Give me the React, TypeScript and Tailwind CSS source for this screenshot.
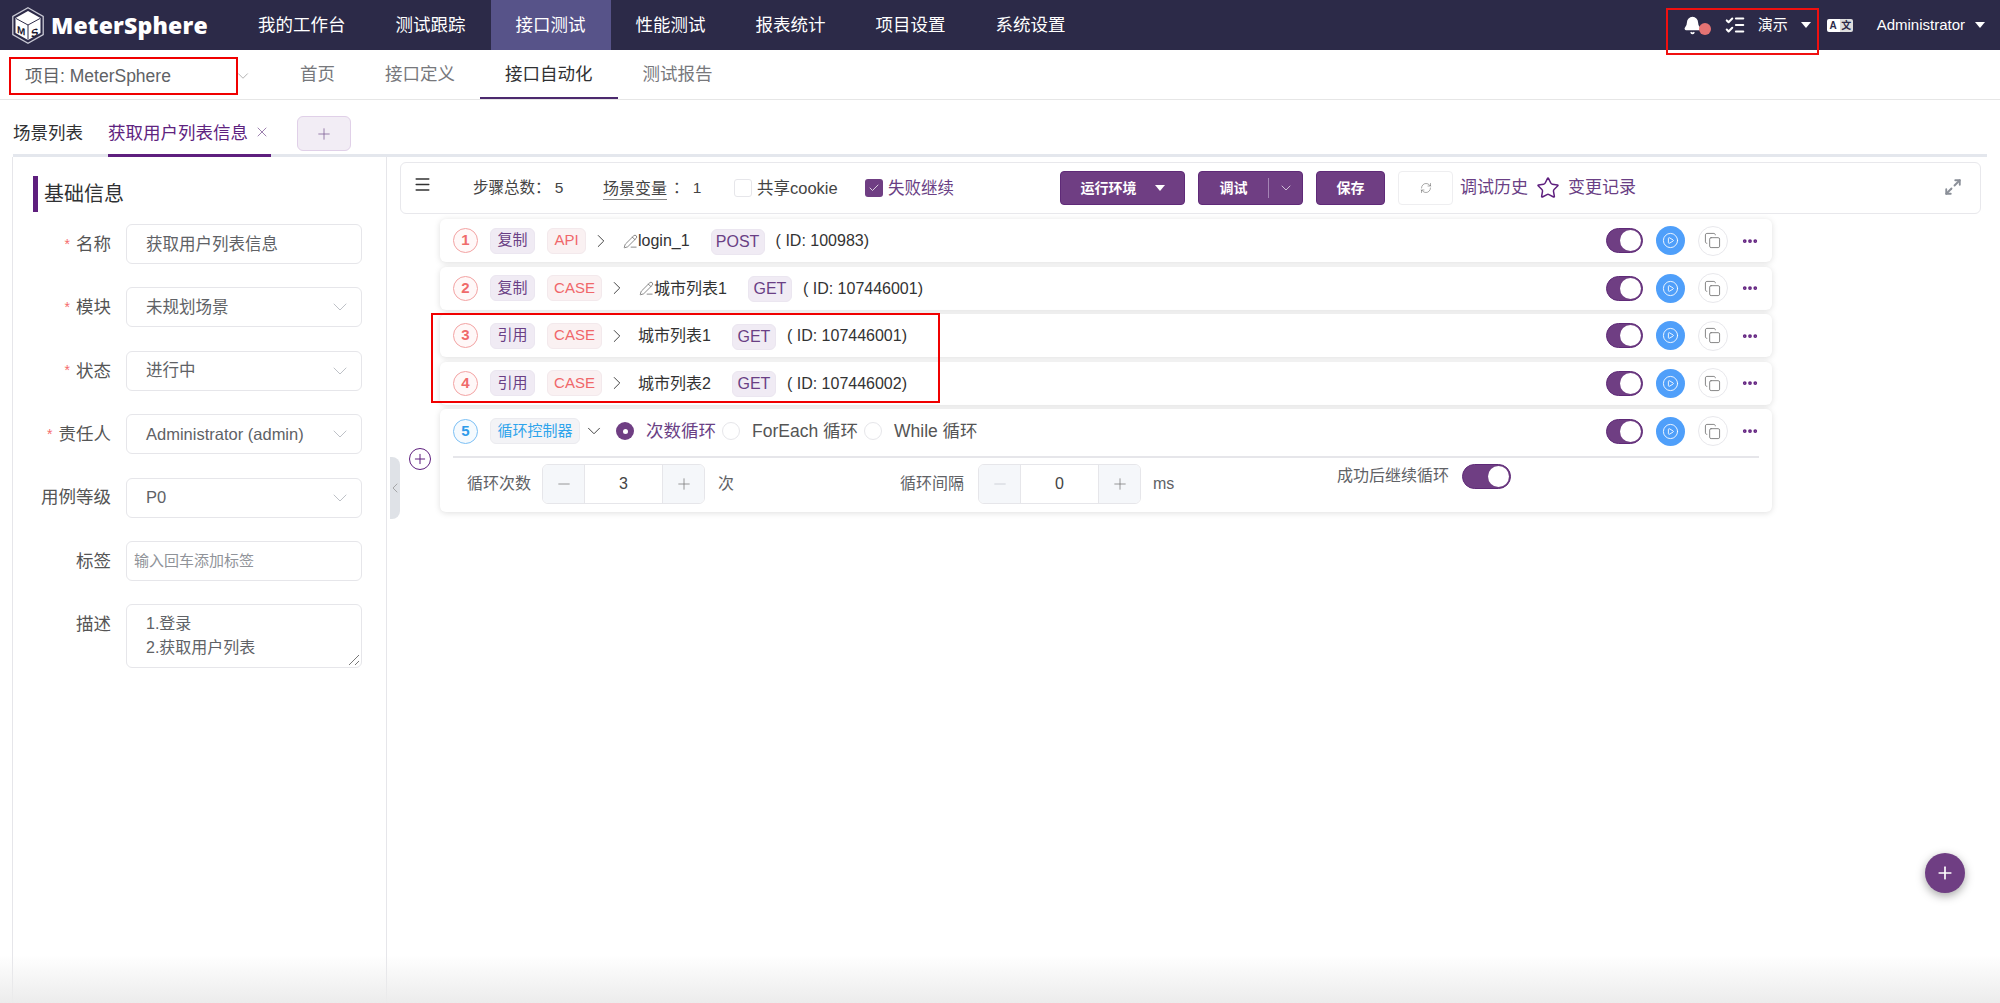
import React from 'react';
import { Bell, ChevronDown, ChevronLeft, ChevronRight, Copy, Ellipsis, ListChecks, Menu, Minus, Plus, RefreshCw, Star, X, Check, Maximize2, PencilLine, CirclePlay } from 'lucide-react';

const navItems = ['我的工作台', '测试跟踪', '接口测试', '性能测试', '报表统计', '项目设置', '系统设置'];

// small caret used in the dark header and the run env button
const Caret: React.FC<{ className?: string }> = ({ className }) => (
  <span className={`inline-block w-0 h-0 border-x-[5px] border-x-transparent border-t-[6px] border-t-white ${className || ''}`} />
);

const Logo: React.FC = () => (
  <svg width="32" height="37" viewBox="0 0 32 37" className="shrink-0">
    <path d="M16 .8 31.200 9.500V27.500L16 36.200 .8 27.500V9.500Z" fill="#2c2a48" stroke="#c9c9d4" strokeWidth="1.300" />
    <path d="M16 4 28.500 11V26L16 33 3.500 26V11Z" fill="#fff" />
    <path d="M4 11.500 16 18 28 11.500M16 18V32.500" stroke="#2c2a48" strokeWidth="1" fill="none" />
    <text x="5" y="27" fontSize="10" fontWeight="900" fill="#1c1a30" fontFamily="Liberation Sans" transform="skewY(20) translate(0 -3)">M</text>
    <text x="19" y="28" fontSize="11" fontWeight="900" fill="#1c1a30" fontFamily="Liberation Sans" transform="skewY(-20) translate(0 10)">S</text>
  </svg>
);

const Field: React.FC<{ label: string; required?: boolean; children: React.ReactNode }> = ({ label, required, children }) => (
  <div className="flex items-center gap-[15px] h-10 mb-[23.400px]">
    <label className="w-[78px] shrink-0 whitespace-nowrap flex justify-end items-center text-[17.500px] text-[#555]">
      {required && <span className="text-[#f56c6c] mr-[6px] text-[14px]">*</span>}
      {label}
    </label>
    {children}
  </div>
);

const SelectBox: React.FC<{ value: string }> = ({ value }) => (
  <div className="w-[236px] h-10 border border-[#e6e6ea] rounded-md flex items-center justify-between pl-[19px] pr-[9px] text-[16.500px] text-[#606266]">
    <span>{value}</span>
    <ChevronDown size={24} strokeWidth={0.75} className="text-[#a8acb4]" />
  </div>
);

const Tag: React.FC<{ tone: 'purple' | 'red' | 'blue'; className?: string; children: React.ReactNode }> = ({ tone, className, children }) => {
  const tones = {
    purple: 'bg-[#f0ebf4] border-[#ebe6f0] text-[#6a3f85]',
    red: 'bg-[#faf1f2] border-[#f3e9ec] text-[#f0676a]',
    blue: 'bg-[#f3f3f6] border-[#ebebef] text-[#2ea4ec]',
  };
  return (
    <span className={`inline-flex items-center justify-center h-[26px] rounded-md border text-[15px] ${tones[tone]} ${className || ''}`}>
      {children}
    </span>
  );
};

const StepNo: React.FC<{ n: number; blue?: boolean }> = ({ n, blue }) => (
  <span className={`w-[25px] h-[25px] shrink-0 rounded-full border flex items-center justify-center text-[15px] font-bold ${blue ? 'border-[#7cc0f5] bg-[#f5fafe] text-[#2e9bea]' : 'border-[#f3a3a3] bg-[#fff8f8] text-[#ef6a6a]'}`}>
    {n}
  </span>
);

const RowActions: React.FC = () => (
  <div className="ml-auto flex items-center shrink-0">
    <span className="w-[37px] h-[25px] rounded-full bg-[#6f3e83] border border-[#5f2a78] flex items-center justify-end pr-[1px]">
      <span className="w-[21px] h-[21px] rounded-full bg-white" />
    </span>
    <span className="ml-[13px] w-[29px] h-[29px] rounded-full bg-[#4f9ffa] flex items-center justify-center">
      <CirclePlay size={17} strokeWidth={1.25} className="text-white" />
    </span>
    <span className="ml-[13px] w-[30px] h-[30px] rounded-full bg-white border border-[#e8e8ec] flex items-center justify-center">
      <Copy size={17} strokeWidth={1.25} className="text-[#777]" />
    </span>
    <Ellipsis size={18} strokeWidth={3} className="ml-[13px] mr-[13.500px] text-[#61207f]" />
  </div>
);

interface StepData {
  n: number;
  kind: string;
  type: string;
  name: string;
  pencil?: boolean;
  method: string;
  id: string;
}

const steps: StepData[] = [
  { n: 1, kind: '复制', type: 'API', name: 'login_1', pencil: true, method: 'POST', id: '100983' },
  { n: 2, kind: '复制', type: 'CASE', name: '城市列表1', pencil: true, method: 'GET', id: '107446001' },
  { n: 3, kind: '引用', type: 'CASE', name: '城市列表1', method: 'GET', id: '107446001' },
  { n: 4, kind: '引用', type: 'CASE', name: '城市列表2', method: 'GET', id: '107446002' },
];

const StepRow: React.FC<{ step: StepData }> = ({ step }) => (
  <div className="h-[43px] mb-[4.500px] bg-white rounded-md shadow-[0_1px_6px_rgba(0,0,0,0.13)] flex items-center pl-[13px] text-[16px] text-[#333]">
    <StepNo n={step.n} />
    <Tag tone="purple" className="ml-3 w-[45px]">{step.kind}</Tag>
    <Tag tone="red" className={`ml-3 ${step.type === 'API' ? 'w-[39px]' : 'w-[55px]'}`}>{step.type}</Tag>
    <ChevronRight size={22} strokeWidth={1} className="ml-[4px] text-[#333]" />
    <span className={`flex items-center mt-[1px] ${step.pencil ? 'ml-[11px]' : 'ml-[10px]'}`}>
      {step.pencil && <PencilLine size={15} strokeWidth={1} className="text-[#444]" />}
      {step.name}
    </span>
    <Tag tone="purple" className={`ml-[21px] mt-[2px] text-[16px] ${step.method === 'POST' ? 'w-[54px]' : 'w-[44px]'}`}>{step.method}</Tag>
    <span className="ml-[11px] mt-[1px]">( ID: {step.id})</span>
    <RowActions />
  </div>
);

const Radio: React.FC<{ on?: boolean }> = ({ on }) => (
  <span className={`w-[18px] h-[18px] rounded-full shrink-0 flex items-center justify-center ${on ? 'bg-[#6f3e83]' : 'border border-[#e6e6ea] bg-white'}`}>
    {on && <span className="w-[5px] h-[5px] rounded-full bg-white" />}
  </span>
);

const NumberBox: React.FC<{ value: number; muted?: boolean }> = ({ value, muted }) => (
  <div className="w-[163px] h-10 border border-[#e6e6ea] rounded-md flex items-stretch text-[16px] text-[#444] overflow-hidden">
    <span className="w-[42px] bg-[#f5f7fa] border-r border-[#e6e6ea] flex items-center justify-center">
      <Minus size={18} strokeWidth={1} className={muted ? 'text-[#c0c4cc]' : 'text-[#777]'} />
    </span>
    <span className="flex-1 flex items-center justify-center">{value}</span>
    <span className="w-[42px] bg-[#f5f7fa] border-l border-[#e6e6ea] flex items-center justify-center">
      <Plus size={18} strokeWidth={1} className="text-[#777]" />
    </span>
  </div>
);

const App: React.FC = () => {
  return (
    <div className="relative w-[2000px] h-[1003px] overflow-hidden bg-white font-['Liberation_Sans','Noto_Sans_CJK_SC',sans-serif]">
      {/* Top bar */}
      <header className="h-[50px] bg-[#2c2a48] flex items-center text-white">
        <div className="w-[233px] shrink-0 pl-3 flex items-center gap-[7px]">
          <Logo />
          <span className="text-[23px] font-extrabold tracking-[0.2px] font-['Open_Sans','Liberation_Sans',sans-serif]">MeterSphere</span>
        </div>
        <nav className="flex h-full">
          {navItems.map((item) => (
            <a key={item} className={`h-full px-[25px] flex items-center justify-center text-[17.500px] ${item === '接口测试' ? 'bg-[#575389]' : ''}`}>
              {item}
            </a>
          ))}
        </nav>
        <div className="ml-auto flex items-center text-[15px]">
          <Bell size={19} fill="white" className="mr-[-3px]" />
          <span className="w-3 h-3 mt-2 rounded-full bg-[#e57373]" />
          <ListChecks size={22} strokeWidth={2.25} className="ml-[13px]" />
          <span className="ml-[12px]">演示</span>
          <Caret className="ml-[13px]" />
          <span className="ml-4 w-[26px] h-[13px] flex text-[10px] leading-[13px] font-bold text-[#2c2a48]">
            <span className="w-[13px] bg-white rounded-l-[2px] text-center">A</span>
            <span className="w-[13px] bg-[#ddd] rounded-r-[2px] text-center">文</span>
          </span>
          <span className="ml-6 text-[15px]">Administrator</span>
          <Caret className="ml-[10px] mr-[15px]" />
        </div>
      </header>

      {/* Sub nav */}
      <div className="h-[50px] border-b border-[#e6e6e6] flex items-stretch">
        <div className="w-[275px] pl-[25px] flex items-center justify-between pr-[23px] text-[17.500px] text-[#606266] pt-[3px]">
          <span>项目: MeterSphere</span>
          <ChevronDown size={18} strokeWidth={1} className="text-[#999]" />
        </div>
        {['首页', '接口定义', '接口自动化', '测试报告'].map((item) => (
          <a
            key={item}
            className={`px-[25px] pt-[2px] flex items-center text-[17.500px] border-b-[2px] ${item === '接口自动化' ? 'border-[#4c2a6e] text-[#303133]' : 'border-transparent text-[#77787c]'}`}
          >
            {item}
          </a>
        ))}
      </div>

      {/* Tabs */}
      <div className="ml-[13px] mr-[13px] h-[57px] border-b-[3px] border-[#e4e7ed] flex items-end">
        <span className="w-[95px] h-[34px] text-[17.500px] text-[#303133]">场景列表</span>
        <span className="relative w-[163px] h-[37px] text-[17.500px] text-[#5e2380] flex items-start -mb-[3px] border-b-[3px] border-[#5e1f7e]">
          获取用户列表信息
          <X size={16} strokeWidth={1} className="ml-[6px] mt-[4px] text-[#6a3f85]" />
        </span>
        <span className="ml-[26px] mb-[2px] w-[54px] h-[35px] -translate-y-[1px] bg-[#f2edf5] border border-[#e0d0e8] rounded-md flex items-center justify-center">
          <Plus size={18} strokeWidth={1} className="text-[#7a5a92]" />
        </span>
      </div>

      <div className="flex h-[846px]">
        {/* Base info */}
        <aside className="ml-3 w-[375px] shrink-0 border-x border-[#e6e6ea] pl-5 pt-[19px]">
          <h2 className="h-9 border-l-[5px] border-[#5e1f7e] pl-[6px] flex items-center text-[20px] text-[#303133] mb-[12px]">基础信息</h2>
          <Field label="名称" required>
            <div className="w-[236px] h-10 border border-[#e6e6ea] rounded-md flex items-center pl-[19px] text-[16.500px] text-[#606266]">获取用户列表信息</div>
          </Field>
          <Field label="模块" required><SelectBox value="未规划场景" /></Field>
          <Field label="状态" required><SelectBox value="进行中" /></Field>
          <Field label="责任人" required><SelectBox value="Administrator (admin)" /></Field>
          <Field label="用例等级"><SelectBox value="P0" /></Field>
          <Field label="标签">
            <div className="w-[236px] h-10 border border-[#e6e6ea] rounded-md flex items-center pl-[7px] text-[15px] text-[#909399]">输入回车添加标签</div>
          </Field>
          <div className="flex gap-[15px]">
            <label className="w-[78px] pt-[7px] text-right text-[17.500px] text-[#555]">描述</label>
            <div className="relative w-[236px] h-16 border border-[#e6e6ea] rounded-md pl-[19px] pt-[7px] text-[16px] leading-[24px] text-[#606266]">
              <p>1.登录</p>
              <p>2.获取用户列表</p>
              <svg width="12" height="12" viewBox="0 0 12 12" className="absolute right-[1px] bottom-[1px]">
                <path d="M1 11 11 1M7 11l4-4" stroke="#777" strokeWidth="1" />
              </svg>
            </div>
          </div>
        </aside>

        {/* Scenario steps */}
        <section className="flex-1 min-w-0 flex">
          <div className="w-[13px] shrink-0 pt-[300px] pl-[3px]">
            <span className="w-[10px] h-[62px] bg-[#dfe2e7] rounded-r-[8px] flex items-center justify-center">
              <ChevronLeft size={16} strokeWidth={1} className="text-[#888] shrink-0" />
            </span>
          </div>
          <div className="flex-1 min-w-0 pt-[5px] pr-[19px]">
            <div className="h-[52px] border border-[#e8e8ec] rounded-md flex items-center text-[15.500px] text-[#444]">
              <Menu size={19} strokeWidth={1.75} className="ml-[12px] mb-[7px] text-[#333]" />
              <span className="ml-[41px] w-[130px]">步骤总数：&nbsp;5</span>
              <span className="border-b border-[#888] h-[22px] leading-[22px] mt-[2px] text-[16px]">场景变量</span>
              <span className="ml-[6px] w-[61px]">：&nbsp;1</span>
              <span className="w-[18px] h-[18px] rounded-[3px] border border-[#e6e6ea]" />
              <span className="ml-[5px] w-[108px] text-[16.500px]">共享cookie</span>
              <span className="w-[18px] h-[18px] rounded-[3px] bg-[#6f3e83] flex items-center justify-center">
                <Check size={12} strokeWidth={1.5} className="text-white" />
              </span>
              <span className="ml-[5px] w-[66px] text-[16.500px] text-[#6a3f85]">失败继续</span>

              <button className="ml-[106px] w-[125px] h-[34px] bg-[#6f3e83] border border-[#5f2a78] rounded-[4px] text-white text-[14px] font-bold flex items-center justify-center gap-[18px]">
                运行环境 <Caret />
              </button>
              <button className="ml-[13px] w-[105px] h-[34px] bg-[#6f3e83] border border-[#5f2a78] rounded-[4px] text-white text-[14px] font-bold flex items-center">
                <span className="w-[69px] text-center">调试</span>
                <span className="h-[20px] border-l border-[#a585b5]" />
                <ChevronDown size={16} strokeWidth={1} className="ml-[9px]" />
              </button>
              <button className="ml-[13px] w-[69px] h-[34px] bg-[#6f3e83] border border-[#5f2a78] rounded-[4px] text-white text-[14px] font-bold">保存</button>
              <span className="ml-[13px] w-[55px] h-[34px] bg-white border border-[#eeeef0] rounded-[4px] flex items-center justify-center">
                <RefreshCw size={12} strokeWidth={1} className="text-[#555]" />
              </span>
              <span className="ml-[7px] text-[17px] text-[#6a3f85]">调试历史</span>
              <Star size={24} strokeWidth={1.5} className="ml-2 text-[#5e1f7e]" />
              <span className="ml-2 text-[17px] text-[#6a3f85]">变更记录</span>
              <Maximize2 size={18} strokeWidth={2.5} className="ml-auto mr-[18px] mb-[2px] text-[#8a8f98]" />
            </div>

            <div className="flex mt-[5px]">
              <div className="w-[21px] shrink-0 pt-[229px]">
                <span className="ml-[9px] w-[22px] h-[22px] rounded-full border border-[#5e1f7e] flex items-center justify-center bg-white">
                  <Plus size={16} strokeWidth={1.5} className="text-[#5e1f7e]" />
                </span>
              </div>
              <div className="ml-[19px] w-[1332px] shrink-0">
                {steps.map((s) => <StepRow key={s.n} step={s} />)}

                {/* loop controller */}
                <div className="mt-[1.500px] h-[103px] bg-white rounded-md shadow-[0_1px_6px_rgba(0,0,0,0.13)] pl-[13px] text-[16px]">
                  <div className="h-[49px] pb-[3px] flex items-center text-[#555] border-b-[2px] border-[#e6e6ea] mr-[13px]">
                    <StepNo n={5} blue />
                    <Tag tone="blue" className="ml-3 w-[90px]">循环控制器</Tag>
                    <ChevronDown size={22} strokeWidth={1} className="ml-[3px] text-[#333]" />
                    <span className="ml-[11px]"><Radio on /></span>
                    <span className="ml-3 w-[76px] text-[17.500px] text-[#6a3f85] whitespace-nowrap">次数循环</span>
                    <Radio />
                    <span className="ml-3 w-[112px] text-[17.500px] whitespace-nowrap">ForEach 循环</span>
                    <Radio />
                    <span className="ml-3 text-[17.500px] whitespace-nowrap">While 循环</span>
                    <div className="-mr-[13px] ml-auto"><RowActions /></div>
                  </div>
                  <div className="flex items-start pt-[6px] text-[16px] text-[#606266]">
                    <span className="ml-[14px] w-[75px] leading-10 whitespace-nowrap">循环次数</span>
                    <NumberBox value={3} />
                    <span className="ml-[13px] w-[182px] leading-10">次</span>
                    <span className="w-[78px] leading-10 whitespace-nowrap">循环间隔</span>
                    <NumberBox value={0} muted />
                    <span className="ml-3 w-[184px] leading-10">ms</span>
                    <span className="w-[125px] leading-[24px] whitespace-nowrap">成功后继续循环</span>
                    <span className="w-[49px] h-[25px] rounded-full bg-[#6f3e83] border border-[#5f2a78] flex items-center justify-end pr-[1px]">
                      <span className="w-[21px] h-[21px] rounded-full bg-white" />
                    </span>
                  </div>
                </div>
              </div>
            </div>
          </div>
        </section>
      </div>

      {/* Floating add button */}
      <button className="absolute left-[1925px] top-[853px] w-10 h-10 rounded-full bg-[#6f3e83] shadow-[0_3px_10px_rgba(0,0,0,0.35)] flex items-center justify-center">
        <Plus size={20} strokeWidth={2} className="text-white" />
      </button>

      {/* Red annotation boxes drawn on top of the screenshot */}
      <div className="absolute left-[9px] top-[57px] w-[229px] h-[38px] border-2 border-[#f00000]" />
      <div className="absolute left-[1666px] top-[8px] w-[153px] h-[47px] border-2 border-[#f01010]" />
      <div className="absolute left-[431px] top-[313px] w-[509px] h-[90px] border-2 border-[#f00000]" />

      {/* Window shadow fading at the bottom edge */}
      <div className="absolute inset-x-0 bottom-0 h-[48px] bg-gradient-to-b from-transparent to-[#ececec] pointer-events-none" />
    </div>
  );
};

export default App;
